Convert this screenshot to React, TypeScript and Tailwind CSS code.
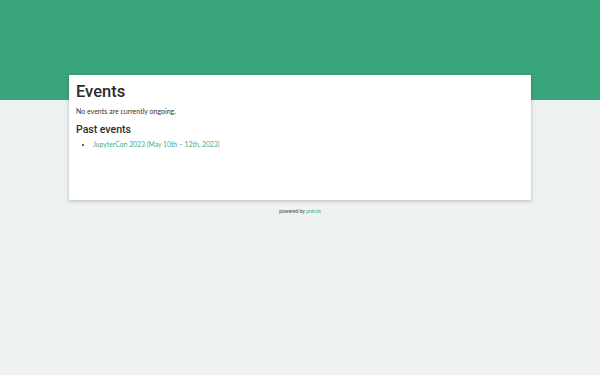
export default function App() {
  return (
    <div className="min-h-[375px] bg-[#eef3f2]" style={{ fontFamily: 'Lato, "Open Sans", sans-serif' }}>
      <div className="h-[100px] bg-[#3ba57b]" />
      <div className="mx-auto -mt-[25px] w-[462px]">
        <div className="h-[125px] bg-white px-[7px] pt-[7px] shadow-[0_1px_4px_rgba(0,0,0,0.25)]">
          <h1 className="text-[16.5px] font-medium leading-[20px] text-[#2b2b2b]" style={{ fontFamily: 'Roboto, sans-serif' }}>
            Events
          </h1>
          <p className="mt-[5px] text-[7px] leading-[9px] text-[#333]">No events are currently ongoing.</p>
          <h2 className="mt-[7px] text-[10.5px] font-medium leading-[14px] text-[#2b2b2b]" style={{ fontFamily: 'Roboto, sans-serif' }}>
            Past events
          </h2>
          <ul className="mt-[3px] list-disc pl-[17px] text-[6.8px] leading-[9px] text-[#333]">
            <li>
              <span className="text-[#45ad84]">JupyterCon 2023 (May 10th – 12th, 2023)</span>
            </li>
          </ul>
        </div>
        <div className="mt-[8px] text-center text-[5px] leading-[7px] text-[#444]">
          powered by <span className="text-[#45ad84]">pretalx</span>
        </div>
      </div>
    </div>
  );
}
